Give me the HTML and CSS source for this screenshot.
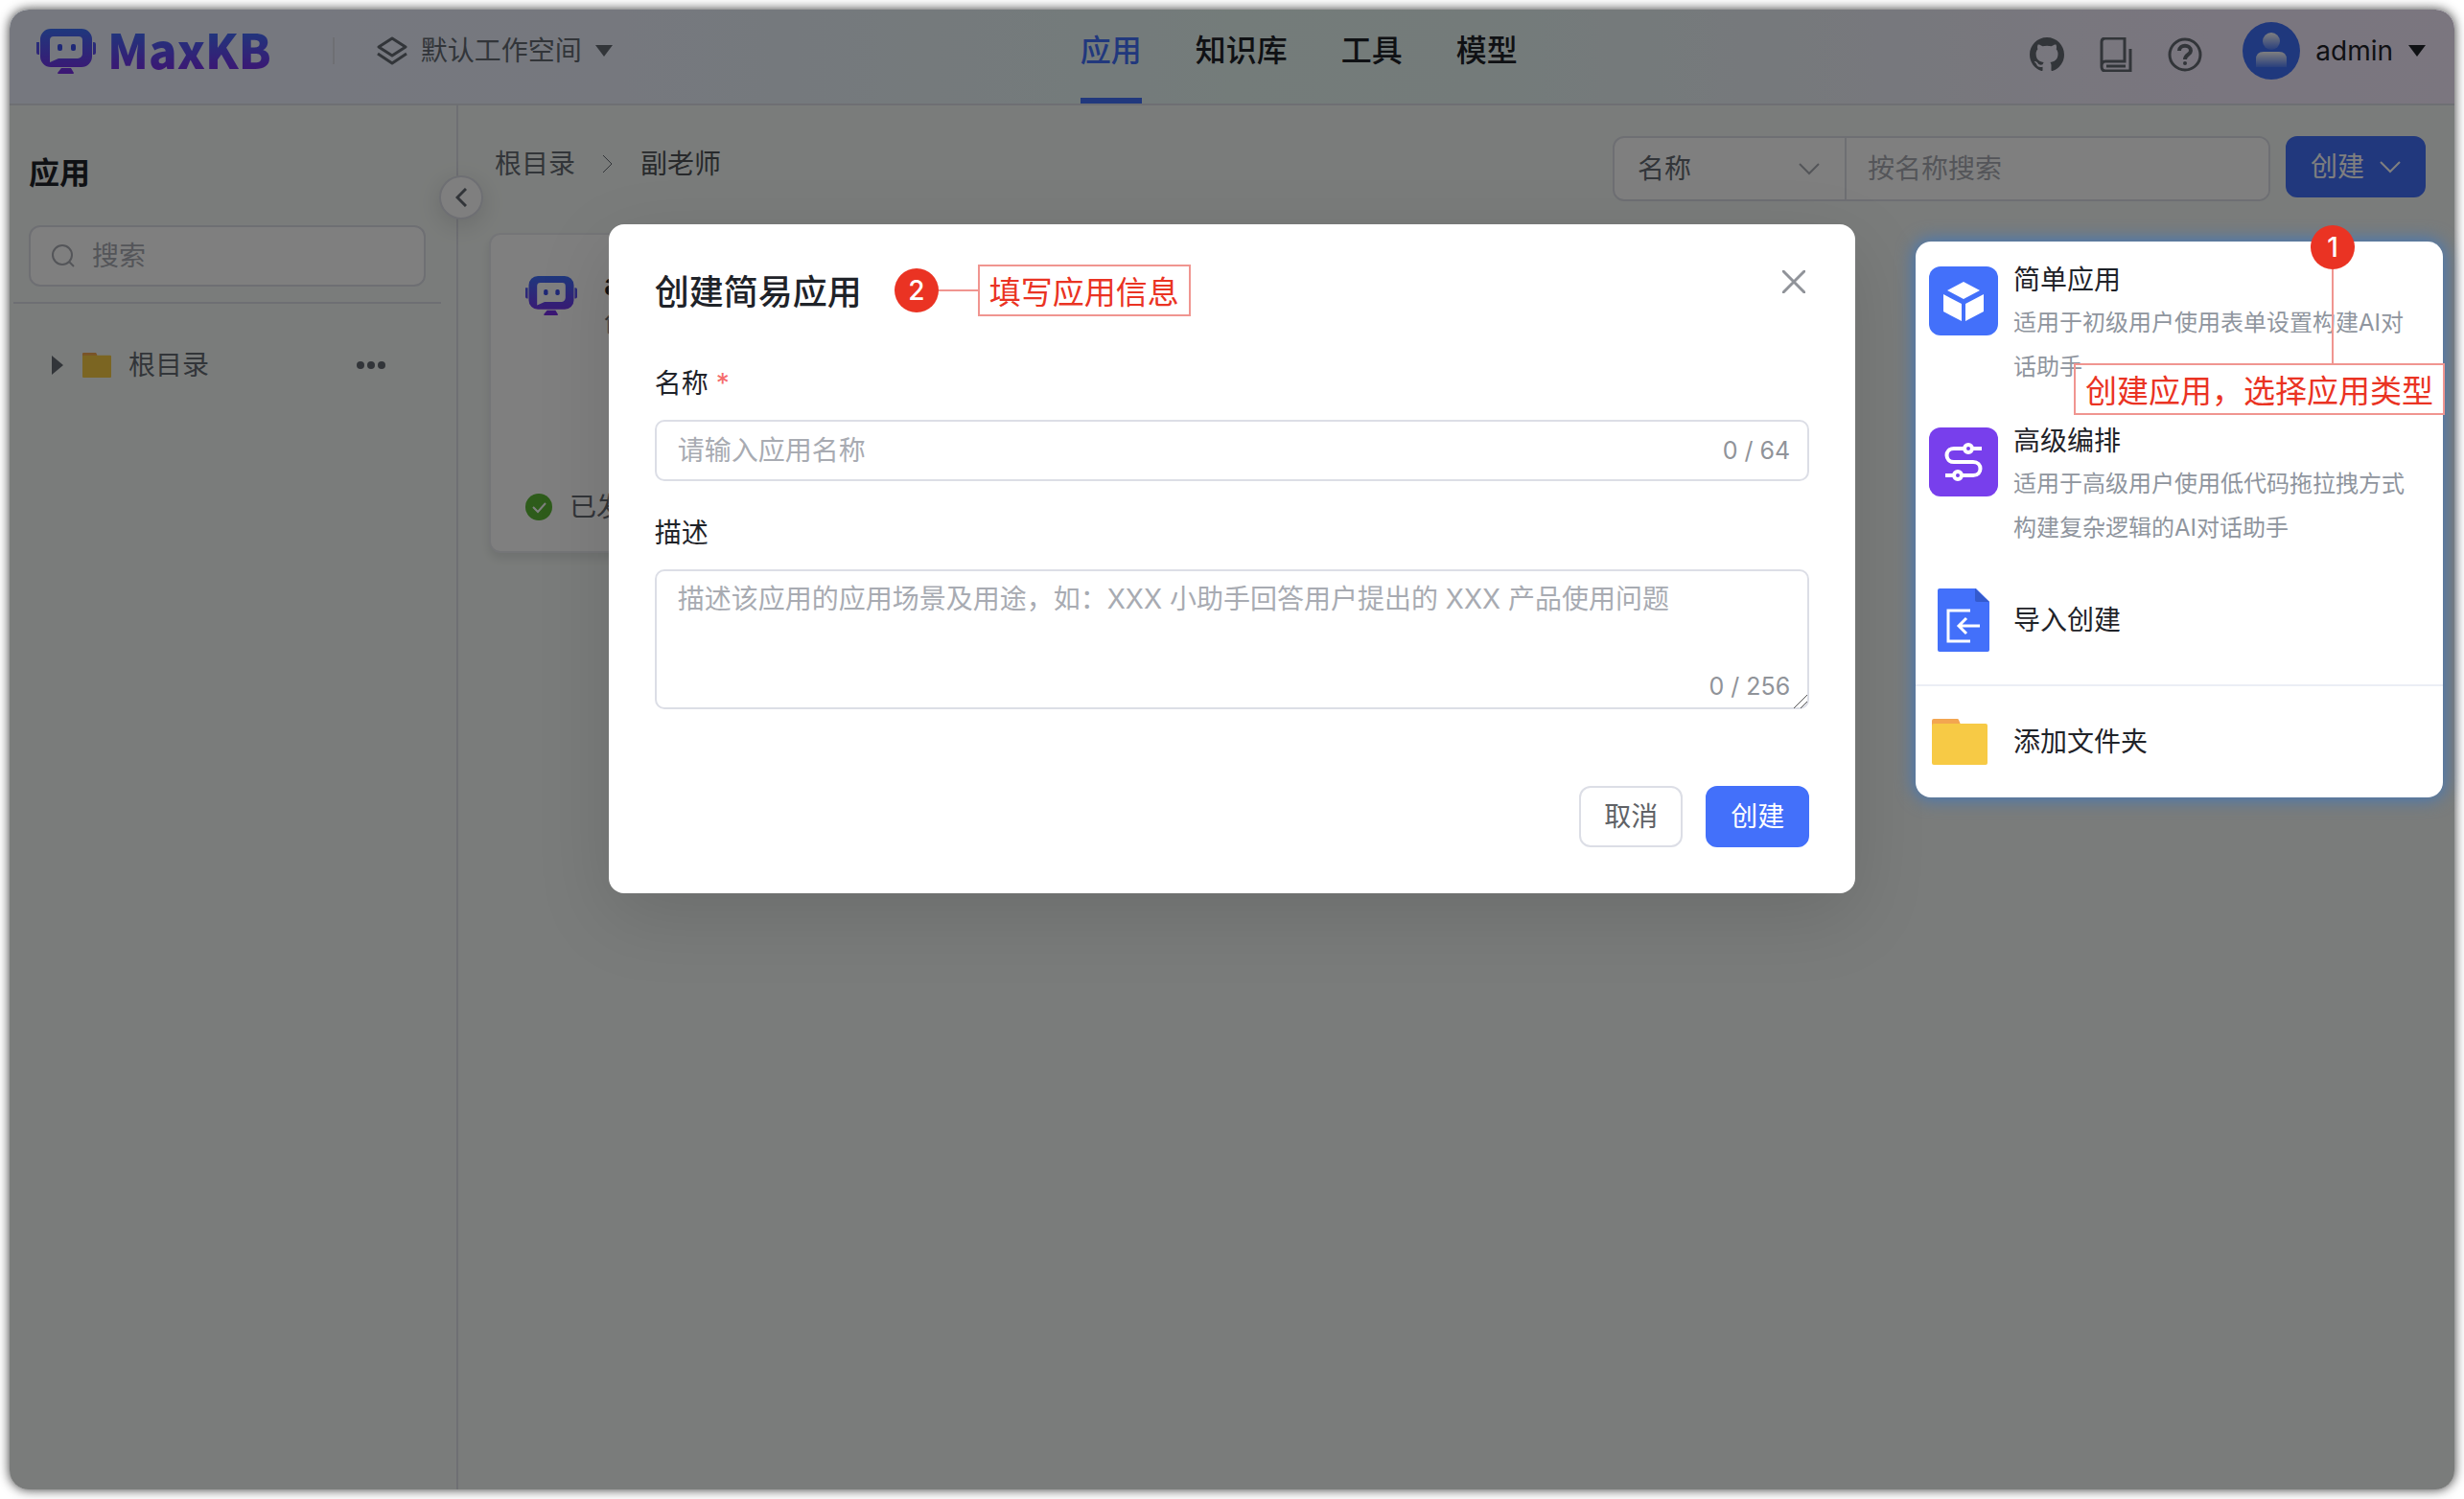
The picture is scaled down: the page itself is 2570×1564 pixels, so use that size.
FILE: index.html
```html
<!DOCTYPE html>
<html lang="zh-CN">
<head>
  <meta charset="UTF-8" />
  <title>MaxKB</title>
  <link rel="stylesheet" href="styles.css">
</head>
<body>

  <!-- Shared icons -->
  <svg class="sprite" aria-hidden="true">
    <defs>
      <linearGradient id="brand" x1="0" y1="0" x2="0" y2="1">
        <stop offset="0" stop-color="#3f70fa" />
        <stop offset="1" stop-color="#7a2ce8" />
      </linearGradient>
      <linearGradient id="face" x1="0" y1="0" x2="0" y2="1">
        <stop offset="0" stop-color="#fff" />
        <stop offset="1" stop-color="#fff" stop-opacity="0.1" />
      </linearGradient>
    </defs>
    <symbol id="robot" viewBox="0 0 62 48">
      <path fill="url(#brand)" fill-rule="evenodd" d="M15 1h32a11 11 0 0 1 11 11v18a11 11 0 0 1-11 11H15A11 11 0 0 1 4 30V12A11 11 0 0 1 15 1zm3 8a4 4 0 0 0-4 4v23l9-4h20a5 5 0 0 0 5-5V13a4 4 0 0 0-4-4zM0 15h3v13H2a2 2 0 0 1-2-2zm59 0h1a2 2 0 0 1 2 2v9a2 2 0 0 1-2 2h-1zM26 42h10l3 5a1 1 0 0 1-1 1H23a1 1 0 0 1-1-1z" />
      <rect x="22" y="17" width="5" height="7" rx="2" fill="#3f50ee" />
      <rect x="36" y="17" width="5" height="7" rx="2" fill="#3f50ee" />
    </symbol>
    <symbol id="down" viewBox="0 0 22 22">
      <path d="M1 6l10 10L21 6" fill="none" stroke="currentColor" stroke-width="2" />
    </symbol>
    <symbol id="folder" viewBox="0 0 58 48" preserveAspectRatio="none">
      <path fill="#f3a650" d="M2 0h24a2 2 0 0 1 2 1l2 5v8H0V2a2 2 0 0 1 2-2z" />
      <rect y="5" width="58" height="43" rx="2" fill="#f7ca45" />
    </symbol>
  </svg>

  <div class="window">

    <header class="header">
      <div class="header-left">
        <a class="logo" href="#">
          <svg class="logo-robot"><use href="#robot" /></svg>
          <span class="logo-text">MaxKB</span>
        </a>
        <span class="header-line"></span>
        <button class="workspace">
          <svg class="workspace-icon" viewBox="0 0 32 30" fill="none" stroke="currentColor" stroke-width="3" stroke-linejoin="round">
            <path d="M16 2l14 9-14 9-14-9z" />
            <path d="M1 18l15 10 15-10" />
          </svg>
          默认工作空间
          <span class="caret"></span>
        </button>
      </div>

      <nav class="nav">
        <a class="nav-item active" href="#">应用</a>
        <a class="nav-item" href="#">知识库</a>
        <a class="nav-item" href="#">工具</a>
        <a class="nav-item" href="#">模型</a>
      </nav>

      <div class="header-right">
        <a class="tool" href="#" aria-label="GitHub">
          <svg viewBox="0 0 16 16" fill="currentColor"><path d="M8 0C3.58 0 0 3.58 0 8c0 3.54 2.29 6.53 5.47 7.59.4.07.55-.17.55-.38 0-.19-.01-.82-.01-1.49-2.01.37-2.53-.49-2.69-.94-.09-.23-.48-.94-.82-1.13-.28-.15-.68-.52-.01-.53.63-.01 1.08.58 1.23.82.72 1.21 1.87.87 2.33.66.07-.52.28-.87.51-1.07-1.78-.2-3.64-.89-3.64-3.95 0-.87.31-1.59.82-2.15-.08-.2-.36-1.02.08-2.12 0 0 .67-.21 2.2.82.64-.18 1.32-.27 2-.27.68 0 1.36.09 2 .27 1.53-1.04 2.2-.82 2.2-.82.44 1.1.16 1.92.08 2.12.51.56.82 1.27.82 2.15 0 3.07-1.87 3.75-3.65 3.95.29.25.54.73.54 1.48 0 1.07-.01 1.93-.01 2.2 0 .21.15.46.55.38A8.01 8.01 0 0 0 16 8c0-4.42-3.58-8-8-8z" /></svg>
        </a>
        <a class="tool" href="#" aria-label="文档">
          <svg viewBox="0 0 36 36" fill="none" stroke="currentColor" stroke-width="3">
            <path d="M3 30V5q0-4 4-4h20v24H7q-4 0-4 5 0 5 4 5h26V12" />
            <path d="M8 30h20" />
          </svg>
        </a>
        <a class="tool" href="#" aria-label="帮助">
          <svg viewBox="0 0 36 36" fill="none" stroke="currentColor" stroke-width="3">
            <circle cx="18" cy="18" r="16" />
            <path d="M12 14c0-7 12-7 12 0 0 4-6 4-6 9" stroke-width="4" />
            <circle cx="18" cy="27" r="2" fill="currentColor" stroke="none" />
          </svg>
        </a>
        <button class="user">
          <svg class="avatar" viewBox="0 0 60 60">
            <circle cx="30" cy="30" r="30" fill="#3f70fa" />
            <circle cx="30" cy="20" r="9" fill="url(#face)" />
            <path d="M14 47V39q0-8 8-8h16q8 0 8 8v8z" fill="url(#face)" />
          </svg>
          admin
          <span class="caret"></span>
        </button>
      </div>
    </header>

    <div class="body">
      <aside class="sidebar">
        <h2 class="sidebar-title">应用</h2>
        <div class="search">
          <svg viewBox="0 0 24 24" fill="none" stroke="currentColor" stroke-width="2"><circle cx="11" cy="11" r="10" /><path d="M18 18l5 5" /></svg>
          <input type="text" placeholder="搜索" aria-label="搜索" />
        </div>
        <div class="tree">
          <span class="tree-arrow"></span>
          <svg class="tree-folder"><use href="#folder" /></svg>
          <span>根目录</span>
          <button class="more" aria-label="更多"><i></i><i></i><i></i></button>
        </div>
        <button class="collapse" aria-label="收起">
          <svg viewBox="0 0 12 20" fill="none" stroke="currentColor" stroke-width="3"><path d="M11 1L2 10l9 9" /></svg>
        </button>
      </aside>

      <main class="main">
        <div class="toolbar">
          <div class="breadcrumb">
            <a href="#">根目录</a>
            <svg viewBox="0 0 12 20" fill="none" stroke="currentColor"><path d="M1 1l9 9-9 9" /></svg>
            <span class="current">副老师</span>
          </div>
          <div class="filter">
            <div class="filter-type">
              <select aria-label="搜索类型"><option>名称</option></select>
              <svg><use href="#down" /></svg>
            </div>
            <input type="text" placeholder="按名称搜索" aria-label="按名称搜索" />
          </div>
          <button class="btn primary">创建 <svg><use href="#down" /></svg></button>
        </div>

        <article class="card">
          <div class="card-head">
            <svg class="card-robot"><use href="#robot" /></svg>
            <div>
              <h3>a</h3>
              <p>创</p>
            </div>
          </div>
          <div class="card-status">
            <svg viewBox="0 0 28 28"><circle cx="14" cy="14" r="14" fill="#5cb837" /><path d="M8 14l5 5 8-9" fill="none" stroke="#fff" stroke-width="2" /></svg>
            已发布
          </div>
        </article>
      </main>
    </div>

    <div class="overlay">
      <form class="dialog" role="dialog" aria-labelledby="dialogTitle">
        <div class="dialog-head">
          <h1 id="dialogTitle">创建简易应用</h1>
          <div class="note">
            <span class="note-num">2</span>
            <span class="note-line"></span>
            <span class="note-text">填写应用信息</span>
          </div>
        </div>
        <button type="button" class="close" aria-label="关闭">
          <svg viewBox="0 0 24 24" fill="none" stroke="currentColor" stroke-width="3" stroke-linecap="round"><path d="M1 1l22 22M23 1L1 23" /></svg>
        </button>

        <label for="appName">名称 <span class="required">*</span></label>
        <div class="field">
          <input id="appName" type="text" placeholder="请输入应用名称" />
          <span class="count">0 / 64</span>
        </div>

        <label for="appDesc">描述</label>
        <div class="field area">
          <textarea id="appDesc" placeholder="描述该应用的应用场景及用途，如：XXX 小助手回答用户提出的 XXX 产品使用问题"></textarea>
          <span class="count">0 / 256</span>
          <svg class="grip" viewBox="0 0 14 14" fill="none" stroke="#555" stroke-width="1"><path d="M0 14L14 0M7 14l7-7" /></svg>
        </div>

        <div class="dialog-foot">
          <button type="button" class="btn">取消</button>
          <button type="button" class="btn primary">创建</button>
        </div>
      </form>
    </div>

    <div class="menu">
      <button class="menu-item">
        <svg class="menu-icon" viewBox="0 0 72 72">
          <rect width="72" height="72" rx="12" fill="#4370fa" />
          <path d="M36 16l17 9-17 9-17-9zM15 29l19 10v18L15 47zM57 29L38 39v18l19-10z" fill="#fff" />
        </svg>
        <span>
          <span class="menu-title">简单应用</span>
          <span class="menu-desc">适用于初级用户使用表单设置构建AI对话助手</span>
        </span>
      </button>
      <button class="menu-item">
        <svg class="menu-icon" viewBox="0 0 72 72" fill="none" stroke="#fff" stroke-width="4">
          <rect width="72" height="72" rx="12" fill="#783fec" stroke="none" />
          <path d="M45 22h10M37 22H26c-10 0-10 14 0 14h20c10 0 10 14 0 14H34M26 50h-9" />
          <circle cx="41" cy="22" r="4" />
          <circle cx="30" cy="50" r="4" />
        </svg>
        <span>
          <span class="menu-title">高级编排</span>
          <span class="menu-desc">适用于高级用户使用低代码拖拉拽方式构建复杂逻辑的AI对话助手</span>
        </span>
      </button>
      <button class="menu-item single">
        <svg class="menu-icon" viewBox="0 0 72 66">
          <path d="M11 0h38l14 14v50a2 2 0 0 1-2 2H11a2 2 0 0 1-2-2V2a2 2 0 0 1 2-2z" fill="#4370fa" />
          <path d="M48 0l15 14H50a2 2 0 0 1-2-2z" fill="#345ace" />
          <path d="M43 23H20v32h23M53 39H32M39 31l-8 8 8 8" fill="none" stroke="#fff" stroke-width="3" />
        </svg>
        <span class="menu-title">导入创建</span>
      </button>
      <button class="menu-item single folder">
        <svg class="menu-icon"><use href="#folder" /></svg>
        <span class="menu-title">添加文件夹</span>
      </button>

      <div class="note vertical">
        <span class="note-num">1</span>
        <span class="note-line"></span>
        <span class="note-text">创建应用，选择应用类型</span>
      </div>
    </div>

  </div>
</body>
</html>
```

FILE: styles.css
```css
:root {
  --primary: #4370fa;
  --text: #1f2329;
  --text-2: #646a73;
  --placeholder: #a8abb2;
  --border: #dcdee6;
  --page: #f5f9f6;
  --red: #ea3323;
}

* {
  box-sizing: border-box;
}

body {
  margin: 0;
  padding: 10px;
  min-height: 100vh;
  display: flex;
  background: #fff;
  color: var(--text);
  font-family: Inter, "Noto Sans CJK SC", sans-serif;
  font-size: 28px;
  line-height: 40px;
}

button, input, select, textarea {
  font: inherit;
  color: inherit;
}

button {
  padding: 0;
  border: none;
  background: none;
  cursor: pointer;
}

a {
  color: inherit;
  text-decoration: none;
}

h1, h2, h3, p {
  margin: 0;
}

svg {
  display: block;
  flex-shrink: 0;
}

::placeholder {
  color: var(--placeholder);
  opacity: 1;
}

.sprite {
  position: absolute;
  width: 0;
  height: 0;
}

.window {
  position: relative;
  flex: 1;
  display: flex;
  flex-direction: column;
  border-radius: 20px;
  background: var(--page);
  box-shadow: 0 0 12px rgba(0, 0, 0, 0.8);
}

/* Header */
.header {
  height: 100px;
  display: grid;
  grid-template-columns: 8fr auto 7fr;
  border-bottom: 2px solid var(--border);
  border-radius: 20px 20px 0 0;
  background: linear-gradient(90deg, #ecf1ff 0%, #ecf1fd 25%, #e8f8f5 50%, #e8f7f5 60%, #f4ecfe 90%, #f6ecff 100%);
}

.header-left,
.header-right {
  display: flex;
  align-items: center;
  padding: 0 30px 12px 28px;
}

.logo {
  display: flex;
  align-items: center;
  gap: 12px;
}

.logo-robot {
  width: 62px;
  height: 48px;
}

.logo-text {
  padding-bottom: 4px;
  font-family: "Noto Sans CJK SC", sans-serif;
  font-size: 49px;
  font-weight: 900;
  background: linear-gradient(#3f70fa, #7a2ce8);
  -webkit-background-clip: text;
  background-clip: text;
  color: transparent;
}

.header-line {
  width: 2px;
  height: 28px;
  margin: 0 44px 0 64px;
  background: var(--border);
}

.workspace {
  display: flex;
  align-items: center;
  gap: 14px;
  color: var(--text-2);
}

.workspace-icon {
  width: 32px;
  height: 30px;
}

.caret {
  border: 9px solid transparent;
  border-top: 12px solid currentColor;
  border-bottom: 0;
}

.nav {
  display: flex;
  gap: 56px;
}

.nav-item {
  display: flex;
  align-items: center;
  padding-bottom: 6px;
  border-bottom: 6px solid transparent;
  font-size: 32px;
  font-weight: 500;
}

.nav-item.active {
  color: var(--primary);
  border-color: var(--primary);
}

.header-right {
  justify-content: flex-end;
  gap: 36px;
}

.tool {
  padding-top: 8px;
  color: var(--text-2);
}

.tool svg {
  width: 36px;
  height: 36px;
}

.user {
  display: flex;
  align-items: center;
  gap: 16px;
  margin-left: 6px;
}

.avatar {
  width: 60px;
  height: 60px;
}

/* Sidebar */
.body {
  flex: 1;
  display: flex;
}

.sidebar {
  position: relative;
  width: 468px;
  padding-top: 51px;
  border-right: 2px solid var(--border);
}

.sidebar-title {
  padding-left: 20px;
  font-size: 32px;
  font-weight: 700;
}

.search {
  display: flex;
  align-items: center;
  gap: 16px;
  height: 64px;
  margin: 34px 32px 16px 20px;
  padding: 0 22px;
  border: 2px solid var(--border);
  border-radius: 12px;
  background: #fff;
  color: var(--placeholder);
}

.search svg {
  width: 24px;
  height: 24px;
}

.search input {
  width: 100%;
  border: none;
  outline: none;
  background: none;
}

.tree {
  display: flex;
  align-items: center;
  gap: 18px;
  margin: 0 16px 0 4px;
  padding: 44px 58px 0 40px;
  border-top: 2px solid var(--border);
  color: var(--text-2);
}

.tree-arrow {
  border: 10px solid transparent;
  border-left: 12px solid currentColor;
  border-right: 0;
}

.tree-folder {
  width: 30px;
  height: 26px;
  margin-left: 2px;
}

.more {
  display: flex;
  gap: 3px;
  margin-left: auto;
}

.more i {
  width: 8px;
  height: 8px;
  border-radius: 50%;
  background: currentColor;
}

.collapse {
  position: absolute;
  top: 73px;
  right: -28px;
  width: 46px;
  height: 46px;
  display: flex;
  align-items: center;
  justify-content: center;
  border: 2px solid var(--border);
  border-radius: 50%;
  background: #fff;
  color: var(--text-2);
  box-shadow: 0 6px 24px rgba(31, 35, 41, 0.15);
}

.collapse svg {
  width: 12px;
  height: 20px;
}

/* Main area */
.main {
  flex: 1;
  padding: 32px 30px 32px 32px;
}

.toolbar {
  display: flex;
  align-items: flex-start;
  gap: 16px;
}

.breadcrumb {
  display: flex;
  align-items: center;
  gap: 28px;
  margin-right: auto;
  padding: 9px 6px;
  color: var(--text-2);
}

.breadcrumb svg {
  width: 12px;
  height: 20px;
}

.current {
  color: #4e5257;
}

.filter {
  width: 686px;
  height: 68px;
  display: flex;
  border: 2px solid var(--border);
  border-radius: 12px;
  background: #fff;
  overflow: hidden;
}

.filter-type {
  width: 242px;
  display: flex;
  align-items: center;
  padding-right: 26px;
  border-right: 2px solid var(--border);
  color: var(--placeholder);
}

.filter-type select {
  flex: 1;
  padding-left: 24px;
  border: none;
  outline: none;
  background: none;
  color: var(--text-2);
  appearance: none;
}

.filter-type svg,
.btn svg {
  width: 22px;
  height: 22px;
}

.filter input {
  flex: 1;
  min-width: 0;
  padding: 0 22px;
  border: none;
  outline: none;
}

.btn {
  height: 64px;
  display: flex;
  align-items: center;
  gap: 16px;
  padding: 0 24px;
  border: 2px solid var(--border);
  border-radius: 12px;
  background: #fff;
  color: #606266;
}

.btn.primary {
  border-color: var(--primary);
  background: var(--primary);
  color: #fff;
}

.card {
  width: 32%;
  height: 334px;
  display: flex;
  flex-direction: column;
  justify-content: space-between;
  margin-top: 33px;
  padding: 32px 36px 26px;
  border: 2px solid #e8eaee;
  border-radius: 12px;
  background: #fff;
  box-shadow: 0 6px 10px rgba(31, 35, 41, 0.1);
}

.card-head {
  display: flex;
  gap: 28px;
}

.card-robot {
  width: 54px;
  height: 42px;
  margin-top: 10px;
}

.card h3 {
  font-size: 32px;
  font-weight: 600;
}

.card p {
  color: var(--text-2);
}

.card-status {
  display: flex;
  align-items: center;
  gap: 18px;
  color: var(--text-2);
}

.card-status svg {
  width: 28px;
  height: 28px;
}

/* Dialog */
.overlay {
  position: absolute;
  inset: 0;
  display: flex;
  align-items: flex-start;
  justify-content: center;
  padding-top: 224px;
  border-radius: 20px;
  background: rgba(0, 0, 0, 0.5);
}

.dialog {
  position: relative;
  width: 51%;
  padding: 42px 48px 48px;
  border-radius: 16px;
  background: #fff;
  box-shadow: 0 24px 80px rgba(0, 0, 0, 0.12);
}

.dialog-head {
  display: flex;
  align-items: center;
  gap: 34px;
  margin-bottom: 50px;
}

.dialog-head h1 {
  padding-top: 4px;
  font-size: 36px;
  font-weight: 500;
}

.close {
  position: absolute;
  top: 48px;
  right: 52px;
  color: #909399;
}

.close svg {
  width: 24px;
  height: 24px;
}

.dialog label {
  display: block;
  margin-bottom: 18px;
}

.required {
  color: #f56c6c;
}

.field {
  position: relative;
  display: flex;
  align-items: center;
  margin-bottom: 34px;
}

.field input,
.field textarea {
  width: 100%;
  height: 64px;
  padding: 0 22px;
  border: 2px solid var(--border);
  border-radius: 10px;
  outline: none;
}

.field textarea {
  display: block;
  height: 146px;
  padding: 9px 22px;
  resize: vertical;
}

.field textarea::-webkit-resizer {
  display: none;
}

.grip {
  position: absolute;
  right: 2px;
  bottom: 1px;
  width: 14px;
  height: 14px;
  pointer-events: none;
}

.count {
  position: absolute;
  right: 20px;
  font-size: 25px;
  color: #909399;
}

.area .count {
  bottom: 4px;
}

.dialog-foot {
  display: flex;
  justify-content: flex-end;
  gap: 24px;
  margin-top: 80px;
}

/* Create menu */
.menu {
  position: absolute;
  top: 242px;
  right: 12px;
  width: 550px;
  border-radius: 16px;
  background: #fff;
  box-shadow: 0 0 18px 2px #4478b8;
}

.menu-item {
  width: 100%;
  height: 168px;
  display: flex;
  align-items: flex-start;
  gap: 16px;
  padding: 20px 24px 14px 14px;
  text-align: left;
}

.menu-item.single {
  height: 126px;
  align-items: center;
  padding: 0 24px 8px 14px;
}

.menu-item.folder {
  height: 118px;
  padding-bottom: 0;
  border-top: 2px solid #ebeef5;
}

.menu-icon {
  width: 72px;
  height: 72px;
  margin-top: 6px;
}

.single .menu-icon {
  height: 66px;
  margin: 0;
}

.folder .menu-icon {
  width: 58px;
  height: 48px;
  margin: 0 11px 0 3px;
}

.menu-title,
.menu-desc {
  display: block;
}

.menu-desc {
  margin-top: 2px;
  font-size: 24px;
  line-height: 46px;
  color: #8f959e;
}

/* Numbered notes */
.note {
  display: flex;
  align-items: center;
}

.note-num {
  width: 46px;
  height: 46px;
  border-radius: 50%;
  background: var(--red);
  color: #fff;
  font-weight: 500;
  line-height: 46px;
  text-align: center;
}

.note-line {
  width: 41px;
  height: 2px;
  background: #f09590;
}

.note-text {
  padding: 7px 10px 3px;
  border: 2px solid #f09590;
  color: var(--red);
  font-size: 33px;
  font-weight: 400;
  white-space: nowrap;
}

.note.vertical {
  position: absolute;
  top: -17px;
  right: -2px;
  flex-direction: column;
  align-items: flex-end;
}

.vertical .note-num {
  margin-right: 94px;
}

.vertical .note-line {
  width: 2px;
  height: 98px;
  margin-right: 116px;
}
```
